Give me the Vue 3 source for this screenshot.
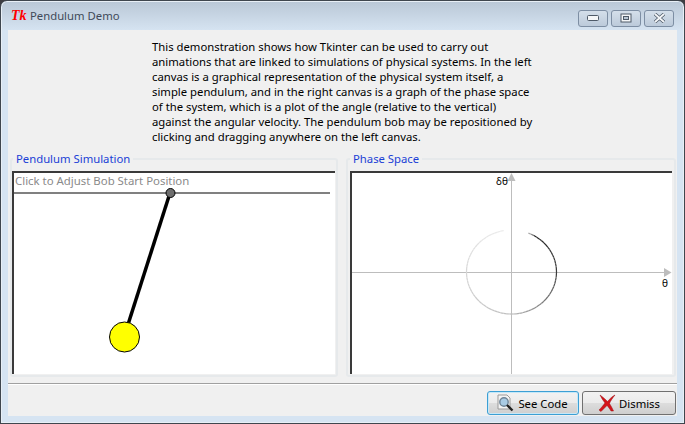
<template>
  <div class="window">
    <div class="titlebar">
      <span class="tk-logo">Tk</span>
      <span class="title">Pendulum Demo</span>
      <div class="controls">
        <button class="ctl">
          <svg width="12" height="6" viewBox="0 0 12 6"><rect x="0.5" y="0.5" width="11" height="5" rx="1" fill="#f4f6f8" stroke="#4e5a68" /></svg>
        </button>
        <button class="ctl">
          <svg width="12" height="10" viewBox="0 0 12 10"><rect x="1" y="1" width="10" height="8" fill="#f4f6f8" stroke="#4e5a68" /><rect x="3.5" y="3.5" width="5" height="3" fill="#b9c6d4" stroke="#4e5a68" /></svg>
        </button>
        <button class="ctl">
          <svg width="13" height="10" viewBox="0 0 13 10"><path d="M2 1 L11 9 M11 1 L2 9" stroke="#4e5a68" stroke-width="3.4" /><path d="M2 1 L11 9 M11 1 L2 9" stroke="#f4f6f8" stroke-width="1.8" /></svg>
        </button>
      </div>
    </div>
    <div class="client">
      <p class="intro">
        This demonstration shows how Tkinter can be used to carry out<br />
        animations that are linked to simulations of physical systems. In the left<br />
        canvas is a graphical representation of the physical system itself, a<br />
        simple pendulum, and in the right canvas is a graph of the phase space<br />
        of the system, which is a plot of the angle (relative to the vertical)<br />
        against the angular velocity. The pendulum bob may be repositioned by<br />
        clicking and dragging anywhere on the left canvas.
      </p>
      <div class="panes">
        <fieldset class="frame frame-left">
          <legend>Pendulum Simulation</legend>
          <svg class="canvas" width="321" height="201" viewBox="14 173 321 201">
            <text x="15" y="185" class="hint">Click to Adjust Bob Start Position</text>
            <line x1="14" y1="193" x2="330" y2="193" stroke="#808080" stroke-width="2" />
            <line x1="170" y1="193" x2="124" y2="337" stroke="#000" stroke-width="3.5" />
            <circle cx="170.5" cy="193" r="4.5" fill="#6e6e6e" stroke="#000" />
            <circle cx="124.5" cy="337" r="15" fill="#ff0" stroke="#000" />
          </svg>
        </fieldset>
        <fieldset class="frame frame-right">
          <legend>Phase Space</legend>
          <svg class="canvas" width="320" height="201" viewBox="352 173 320 201">
            <line x1="511.5" y1="178" x2="511.5" y2="374" stroke="#bdbdbd" />
            <line x1="352" y1="272.5" x2="666" y2="272.5" stroke="#bdbdbd" />
            <path d="M511.5 173 L507.5 181 L515.5 181 Z" fill="#bdbdbd" />
            <path d="M671.5 272.5 L664 268 L664 277 Z" fill="#bdbdbd" />
            <text x="496" y="185" class="axis">δθ</text>
            <text x="662" y="287" class="axis">θ</text>
            <path v-for="s in arc" :key="s.d" :d="s.d" :stroke="s.color" fill="none" stroke-width="1.2" />
          </svg>
        </fieldset>
      </div>
      <div class="footer">
        <button class="btn btn-focus">
          <svg width="19" height="19" viewBox="0 0 19 19">
            <path d="M2 1 H11 L14 4 V15 H2 Z" fill="#f4f4f4" stroke="#9a9a9a" />
            <circle cx="8" cy="8" r="4.2" fill="#a9cbe4" stroke="#6f8496" stroke-width="1.4" />
            <path d="M11 11 L16.5 16.5" stroke="#222" stroke-width="2.4" />
          </svg>
          See Code
        </button>
        <button class="btn">
          <svg width="18" height="18" viewBox="0 0 18 18">
            <path d="M2 1 C6 4 8 6 9.5 7.5 C11.5 5 14 2.5 17 1 C14.5 4 12.5 7 11.5 9.5 C13 12 14.5 14.5 15.5 17 L13 17 C11.5 14.5 10.5 13 9 11.5 C7 13.5 5 15.5 3 17.5 L1 16 C3.5 13.5 5.5 11 7 9 C5 6.5 3.5 4 2 1 Z" fill="#d5141a" stroke="#9b1014" stroke-width="0.5" />
          </svg>
          Dismiss
        </button>
      </div>
    </div>
  </div>
</template>

<script setup>
const cx = 511.5;
const cy = 272;
const rx = 45;
const ry = 42;

function shade(a) {
  let g;
  if (a < 30) g = 170 - (a - 22) * 12;
  else if (a < 90) g = 40 + (a - 30) * 0.3;
  else if (a < 180) g = 60 + (a - 90) * 1.45;
  else g = 190 + (a - 180) * 0.28;
  const v = Math.round(g);
  return `rgb(${v},${v},${v})`;
}

const arc = [];
for (let a = 22; a < 350; a += 4) {
  const p = (deg) => {
    const t = (deg * Math.PI) / 180;
    return `${(cx + rx * Math.sin(t)).toFixed(1)} ${(cy - ry * Math.cos(t)).toFixed(1)}`;
  };
  arc.push({ d: `M${p(a)} L${p(a + 4)}`, color: shade(a) });
}
</script>

<style>
html,
body {
  margin: 0;
  background: #3d3d42;
}
</style>

<style scoped>
.window {
  box-sizing: border-box;
  width: 685px;
  height: 424px;
  display: flex;
  flex-direction: column;
  padding: 0 7px 7px;
  border: 1px solid #3f464e;
  border-radius: 7px 7px 0 0;
  background: linear-gradient(180deg, #b9c7d6 0, #d6e4f2 30px, #d6e4f2 100%);
  box-shadow: inset 0 0 0 1px #e8eff6;
  font-family: "Noto Sans", sans-serif;
  font-size: 11.3px;
  overflow: hidden;
}
.titlebar {
  height: 29px;
  flex: none;
  display: flex;
  align-items: center;
  color: #3f4a58;
}
.tk-logo {
  width: 19px;
  margin-left: 3px;
  color: #f00;
  font: italic bold 14px "Liberation Serif", serif;
}
.title {
  font-size: 11.3px;
}
.controls {
  margin-left: auto;
  margin-right: 3px;
  margin-top: 5px;
  display: flex;
  gap: 3px;
}
.ctl {
  width: 30px;
  height: 17px;
  padding: 0;
  display: flex;
  align-items: center;
  justify-content: center;
  border: 1px solid #7d8ea3;
  border-radius: 3px;
  background: linear-gradient(180deg, #d4dfea, #bccada);
}
.client {
  flex: 1;
  min-height: 0;
  display: flex;
  flex-direction: column;
  background: #f0f0f0;
  color: #000;
}
.intro {
  margin: 9px 0 0 144px;
  line-height: 15px;
  height: 113px;
}
.panes {
  display: flex;
  gap: 8px;
  padding: 0 1px 0 2px;
  margin-bottom: 6px;
  height: 225px;
}
.frame {
  box-sizing: border-box;
  margin: 0;
  padding: 5px 0 0;
  border: 2px solid #e6e9eb;
  border-radius: 3px;
  height: 225px;
}
.frame-left {
  width: 328px;
}
.frame-right {
  width: 330px;
  padding-left: 2px;
}
.frame legend {
  margin-left: 1px;
  padding: 0 3px;
  color: #1a3fd6;
  line-height: 14px;
}
.frame-right legend {
  margin-left: 0;
}
.canvas {
  display: block;
  box-sizing: content-box;
  background: #fff;
  border-top: 2px solid #3a3a3a;
  border-left: 2px solid #3a3a3a;
}
.hint {
  font-size: 11.4px;
  fill: #8a8a8a;
}
.axis {
  font-size: 10px;
  fill: #000;
}
.footer {
  flex: 1;
  display: flex;
  justify-content: flex-end;
  align-items: flex-end;
  gap: 3px;
  padding: 0 1px 1px 0;
  border-top: 1px solid #a0a0a0;
  box-shadow: inset 0 1px 0 #fff;
}
.btn {
  box-sizing: border-box;
  height: 24px;
  width: 94px;
  padding: 0;
  display: flex;
  align-items: center;
  justify-content: center;
  gap: 3px;
  border: 1px solid #707070;
  border-radius: 3px;
  background: linear-gradient(180deg, #f2f2f2 0, #ebebeb 50%, #dddddd 50%, #cfcfcf 100%);
  font: inherit;
  color: #000;
}
.btn-focus {
  width: 92px;
  padding-right: 2px;
  border-color: #3c9fd4;
  box-shadow: inset 0 0 0 1px #c6e8f8;
}
</style>
